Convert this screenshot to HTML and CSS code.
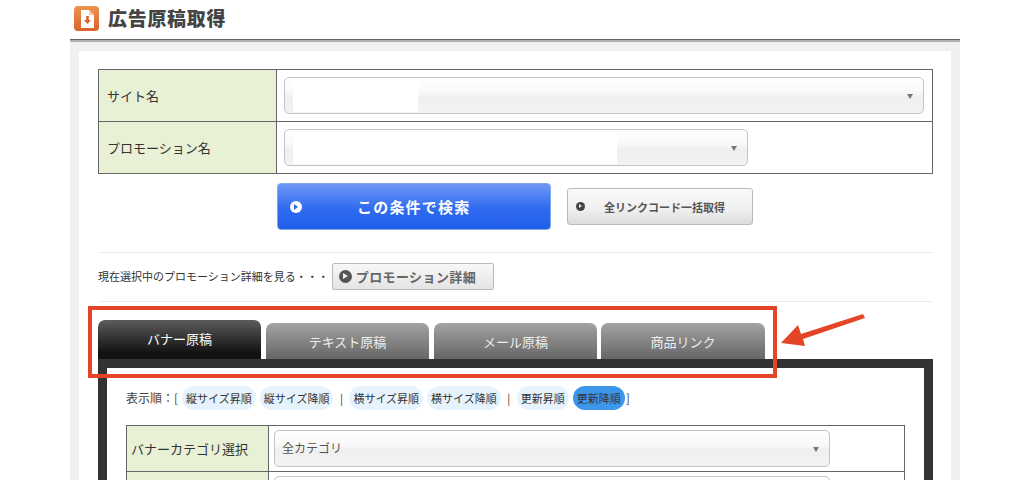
FILE: index.html
```html
<!DOCTYPE html>
<html lang="ja">
<head>
<meta charset="utf-8">
<title>広告原稿取得</title>
<link rel="stylesheet" href="styles.css">
</head>
<body>
<div class="page">
  <header class="title-bar">
    <span class="title-icon">
      <svg width="16" height="18" viewBox="0 0 16 18"><path d="M2 0h8l5 5v13H2z" fill="#fff"/><path d="M10 0v5h5z" fill="#f3c9a8"/><path d="M7.200 6h2.600v4h2.200L8.500 14 5 10h2.200z" fill="#d9622b"/></svg>
    </span>
    <h1 class="title">広告原稿取得</h1>
  </header>
  <main class="outer">
    <div class="inner">
      <table class="form-table">
        <tr>
          <th>サイト名</th>
          <td><div class="select select-wide"><span class="mask mask-wide"></span><span class="caret"></span></div></td>
        </tr>
        <tr>
          <th>プロモーション名</th>
          <td><div class="select select-mid"><span class="mask mask-mid"></span><span class="caret"></span></div></td>
        </tr>
      </table>
      <div class="actions">
        <a class="btn-search"><span class="dot dot-white"></span><span class="btn-search-label">この条件で検索</span></a>
        <a class="btn-all"><span class="dot dot-dark"></span><span class="btn-all-label">全リンクコード一括取得</span></a>
      </div>
      <div class="detail-row">
        <span class="detail-text">現在選択中のプロモーション詳細を見る・・・</span>
        <a class="btn-detail"><span class="dot dot-gray"></span>プロモーション詳細</a>
      </div>
      <nav class="tabs">
        <a class="tab tab-active">バナー原稿</a>
        <a class="tab">テキスト原稿</a>
        <a class="tab">メール原稿</a>
        <a class="tab tab-last">商品リンク</a>
      </nav>
      <section class="tab-panel">
        <div class="sort-row">
          <span class="sort-label">表示順：[</span>
          <a class="pill">縦サイズ昇順</a>
          <a class="pill">縦サイズ降順</a>
          <span class="sep">|</span>
          <a class="pill">横サイズ昇順</a>
          <a class="pill">横サイズ降順</a>
          <span class="sep">|</span>
          <a class="pill">更新昇順</a>
          <a class="pill pill-on">更新降順</a>
          <span class="close">]</span>
        </div>
        <table class="form-table panel-table">
          <tr>
            <th>バナーカテゴリ選択</th>
            <td><div class="select select-cat">全カテゴリ<span class="caret"></span></div></td>
          </tr>
          <tr>
            <th></th>
            <td><div class="select select-cat"></div></td>
          </tr>
        </table>
      </section>
    </div>
  </main>
  <div class="callout"></div>
  <svg class="arrow" width="90" height="36" viewBox="0 0 90 36"><path d="M2 30 19 12l3 9L84 1l2 4-62 21 2 7z" fill="#e44527"/></svg>
</div>
</body>
</html>
```
FILE: styles.css
```css
* { box-sizing: border-box; }
html, body { margin: 0; padding: 0; }
body {
  background: #fff;
  color: #333;
  font-family: "Noto Sans CJK JP", "Noto Sans", sans-serif;
  font-size: 12px;
  height: 480px;
  overflow: hidden;
}
.page { position: relative; width: 1024px; height: 480px; overflow: hidden; }

.title-bar {
  margin: 0 64px 0 70px;
  height: 40px;
  padding: 6px 0 0 4px;
  display: flex;
  align-items: flex-start;
  gap: 9px;
  border-bottom: 1px solid #666;
}
.title-icon {
  width: 25px;
  height: 25px;
  border-radius: 4px;
  background: linear-gradient(#ee9350, #d9622b);
  display: flex;
  align-items: center;
  justify-content: center;
}
.title {
  margin: 0;
  font-size: 19px;
  line-height: 24px;
  letter-spacing: 0.7px;
  font-weight: 900;
  color: #444;
}

.outer {
  margin: 0 64px 0 70px;
  height: 440px;
  background: #f0f0f0;
  border-top: 2px solid #b0b0b0;
  padding: 9px 9px 0;
}
.inner { background: #fff; height: 429px; padding: 18px 18px 0 19px; }

.form-table {
  border-collapse: collapse;
  width: 835px;
  table-layout: fixed;
}
.form-table th, .form-table td { border: 1px solid #666; height: 52px; padding: 0; }
.form-table th {
  width: 178px;
  background: #e8f1d5;
  font-weight: 400;
  font-size: 13px;
  text-align: left;
  padding-left: 8px;
  color: #333;
}
.form-table td { padding-left: 7px; }

.select {
  position: relative;
  height: 37px;
  border: 1px solid #c4c4c4;
  border-radius: 5px;
  background: linear-gradient(#fff, #f9f9f9 40%, #efefef 55%, #f3f3f3);
  font-size: 12px;
  line-height: 33px;
  color: #555;
  padding-left: 7px;
}
.select-wide { width: 640px; }
.select-mid { width: 464px; }
.select-cat { width: 556px; }
.mask { position: absolute; left: 8px; top: 1px; bottom: 1px; background: #fff; }
.mask-wide { width: 125px; }
.mask-mid { width: 324px; }
.caret {
  position: absolute;
  right: 10px;
  top: 16px;
  width: 0;
  height: 0;
  border-left: 3px solid transparent;
  border-right: 3px solid transparent;
  border-top: 5px solid #777;
}

.actions {
  display: flex;
  align-items: center;
  margin: 9px 0 0 179px;
  gap: 16px;
  height: 47px;
}
.btn-search {
  width: 274px;
  height: 47px;
  border: 1px solid #7fa6ee;
  border-radius: 4px;
  background: linear-gradient(#6f97f6, #2f6bf0 55%, #215fe8);
  color: #fff;
  display: flex;
  align-items: center;
  padding-left: 12px;
  font-weight: 700;
  font-size: 15px;
  letter-spacing: 1.2px;
}
.btn-search-label { margin-left: 55px; }
.btn-all {
  width: 186px;
  height: 37px;
  border: 1px solid #bbb;
  border-radius: 3px;
  background: linear-gradient(#fafafa, #efefef 60%, #dcdcdc);
  display: flex;
  align-items: center;
  padding-left: 8px;
  font-size: 11px;
  font-weight: 700;
  color: #555;
}
.btn-all-label { margin-left: 19px; }
.dot {
  display: inline-block;
  width: 12px;
  height: 12px;
  border-radius: 50%;
  position: relative;
  flex: none;
}
.dot::after {
  content: "";
  position: absolute;
  left: 4px;
  top: 3px;
  width: 0;
  height: 0;
  border-left: 4px solid;
  border-top: 3px solid transparent;
  border-bottom: 3px solid transparent;
}
.dot-white { background: #fff; }
.dot-white::after { border-left-color: #2f6bf0; }
.dot-dark { background: #444; width: 9px; height: 9px; }
.dot-dark::after { border-left-color: #eee; left: 3px; top: 2px; border-left-width: 3px; border-top-width: 2.500px; border-bottom-width: 2.500px; }
.dot-gray { background: #555; width: 13px; height: 13px; margin-right: 4px; }
.dot-gray::after { border-left-color: #eee; left: 4px; top: 3.500px; border-left-width: 5px; }

.detail-row {
  margin-top: 22px;
  height: 50px;
  padding-bottom: 2px;
  border-top: 1px solid #ebebeb;
  border-bottom: 1px solid #ebebeb;
  display: flex;
  align-items: center;
  font-size: 11px;
  gap: 3px;
}
.detail-text { color: #333; }
.btn-detail {
  width: 162px;
  height: 27px;
  border: 1px solid #bbb;
  border-radius: 2px;
  background: linear-gradient(#f8f8f8, #e4e4e4);
  display: flex;
  align-items: center;
  padding-left: 6px;
  font-size: 13px;
  font-weight: 700;
  color: #666;
  letter-spacing: 0.4px;
}

.tabs {
  display: flex;
  align-items: flex-end;
  gap: 5px;
  margin-top: 18px;
  height: 39px;
}
.tab {
  width: 163px;
  height: 36px;
  border-radius: 7px 7px 0 0;
  background: linear-gradient(#a3a3a3, #666);
  color: #eee;
  font-size: 13px;
  text-align: center;
  line-height: 38px;
  flex: none;
}
.tab-active {
  height: 39px;
  background: linear-gradient(#5c5c5c, #111 85%);
  color: #fff;
  line-height: 38px;
}
.tab-last { margin-left: -1px; width: 164px; }

.tab-panel {
  width: 835px;
  height: 200px;
  border: 9px solid #333;
  border-bottom: 0;
  padding: 0 19px;
}
.sort-row {
  height: 57px;
  display: flex;
  align-items: center;
  font-size: 12px;
  color: #444;
  padding-top: 2px;
}
.sort-label { margin-right: 4px; }
.pill {
  height: 24px;
  line-height: 24px;
  padding: 0 4px;
  border-radius: 12px;
  background: #e6f3fd;
  color: #333;
  font-size: 11px;
}
.pill + .pill { margin-left: 4px; }
.sep { margin: 0 6.500px; color: #333; font-size: 11px; }
.pill-on { background: #3c97ea; }
.panel-table { width: 779px; }
.panel-table th, .panel-table td { height: 46px; }
.panel-table th { width: 142px; padding-left: 4px; }
.panel-table td { padding-left: 5px; }
.close { font-size: 12px; margin-left: 1px; }

.callout {
  position: absolute;
  left: 88px;
  top: 306px;
  width: 689px;
  height: 72px;
  border: 4px solid #e44527;
}
.arrow { position: absolute; left: 779px; top: 313px; }
```
